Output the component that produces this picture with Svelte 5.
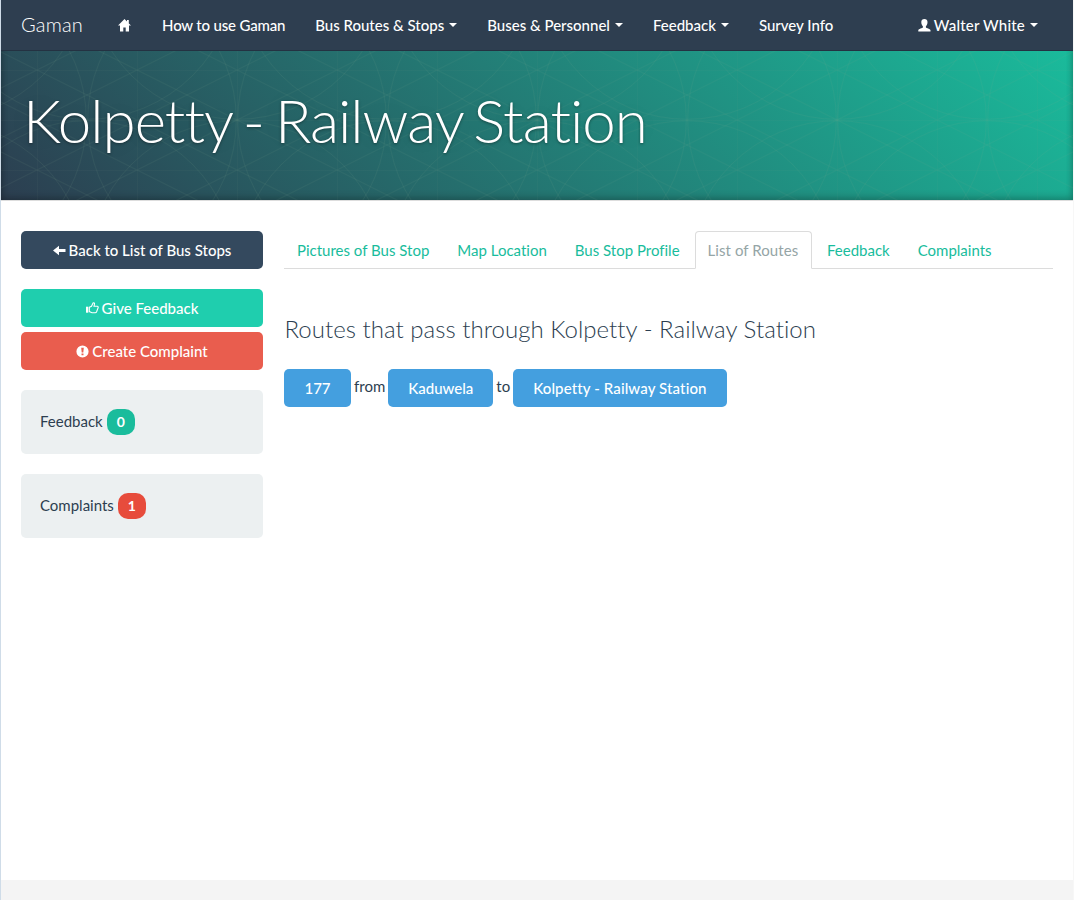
<script>
  const menu = [
    { label: 'How to use Gaman', tight: true },
    { label: 'Bus Routes & Stops', caret: true },
    { label: 'Buses & Personnel', caret: true },
    { label: 'Feedback', caret: true },
    { label: 'Survey Info' }
  ];
  const tabs = ['Pictures of Bus Stop', 'Map Location', 'Bus Stop Profile', 'List of Routes', 'Feedback', 'Complaints'];
  const active = 'List of Routes';
</script>

<div class="page">
  <nav>
    <a class="brand" href="#top">Gaman</a>
    <a class="item" href="#home" aria-label="Home">
      <svg class="home" width="13" height="13" viewBox="0 0 13 13"><path d="M6.500 0 0 6.600h2V12.500h3.300V8.600h2.400V12.500H11V6.600h2L10.800 4.400V1H9v1.600z" /></svg>
    </a>
    {#each menu as m}
      <a class="item" class:tight={m.tight} href="#menu">{m.label}{#if m.caret}<b class="caret"></b>{/if}</a>
    {/each}
    <a class="item user" href="#user"><svg width="13" height="13" viewBox="0 0 13 13"><path d="M6.400 0C4.500 0 3.300 1 3.300 3c0 2 .7 3.400 1.600 4.200v1.300C4.500 9.400.5 9.600.3 11.300V12.500h12.200v-1.200C12.300 9.600 8.300 9.400 7.900 8.500V7.200C8.800 6.400 9.500 5 9.500 3c0-2-1.200-3-3.100-3z" /></svg><span>Walter White</span><b class="caret"></b></a>
  </nav>

  <header>
    <svg class="mesh" width="100%" height="100%" aria-hidden="true">
      <defs>
        <pattern id="lines" width="100" height="50" x="36" y="30" patternUnits="userSpaceOnUse">
          <path d="M0 0 100 50M0 50 100 0" />
          <path class="faint" d="M.5 0V50M0 .5H100" />
        </pattern>
        <pattern id="rings" width="150" height="150" x="86" y="80" patternUnits="userSpaceOnUse">
          {#each [-150, 0, 150, 300] as cx}
            {#each [-150, 0, 150, 300] as cy}
              <circle {cx} {cy} r="149.300" />
            {/each}
          {/each}
        </pattern>
      </defs>
      <rect width="100%" height="100%" fill="url(#lines)" />
      <rect width="100%" height="100%" fill="url(#rings)" />
    </svg>
    <h1>Kolpetty - Railway Station</h1>
  </header>

  <main>
    <aside>
      <a class="btn navy" href="#back"><svg width="13" height="11" viewBox="0 0 13 11"><path d="M0 5.500 6 .8v3.300h6.500v2.800H6v3.300z" /></svg>Back to List of Bus Stops</a>
      <a class="btn green" href="#give"><svg width="13" height="12" viewBox="0 0 13 12"><path d="M0 4.700h2.300v6H0z" /><path class="outline" d="M3.300 5.300 5.500 4.300 7 1c.9-.6 1.700.1 1.500 1.200L8 4.300h3.200c.9 0 1.200.7.9 1.500l-1.500 4c-.3.7-.7.9-1.300.9H6L3.300 9.600z" /></svg>Give Feedback</a>
      <a class="btn red" href="#create"><svg width="13" height="13" viewBox="0 0 13 13"><path fill-rule="evenodd" d="M6.500.4a6.100 6.100 0 1 1 0 12.200 6.100 6.100 0 0 1 0-12.200zM5.200 2.700l.5 4.800h1.600l.5-4.800zM5.500 8.400v1.800h2V8.400z" /></svg>Create Complaint</a>
      <div class="well">Feedback <span class="badge">0</span></div>
      <div class="well">Complaints <span class="badge danger">1</span></div>
    </aside>

    <section>
      <div class="tabs">
        {#each tabs as t}
          <a href="#tab" class:active={t === active}>{t}</a>
        {/each}
      </div>
      <h3>Routes that pass through Kolpetty - Railway Station</h3>
      <div class="route">
        <a class="btn blue" href="#r">177</a><span>from</span><a class="btn blue" href="#r">Kaduwela</a><span>to</span><a class="btn blue" href="#r">Kolpetty - Railway Station</a>
      </div>
    </section>
  </main>
  <footer></footer>
</div>

<style>
  :global(body) { margin: 0; background: #fff; }
  * { box-sizing: border-box; }
  a { text-decoration: none; color: inherit; }
  svg { fill: currentColor; flex: none; }
  .page {
    display: flex; flex-direction: column; height: 900px; overflow: hidden;
    border-left: 1px solid #cfdce8; border-right: 1px solid #f7f7f7;
    font: 400 15px/21px Lato, sans-serif; color: #2c3e50; font-variant-ligatures: none;
  }
  nav {
    position: relative; z-index: 1; flex: none; display: flex; align-items: center;
    height: 51px; padding: 0 20px; background: #2e3e50; border-bottom: 1px solid #243242; color: #fff;
  }
  .brand { font-size: 20px; font-weight: 300; letter-spacing: .2px; margin: -2px 20px 0 0; }
  .item { display: flex; align-items: center; padding: 0 15px; font-weight: 500; white-space: nowrap; }
  .tight { letter-spacing: -.18px; margin-left: 1px; }
  .user { margin-left: auto; }
  .user span { margin-left: 3px; letter-spacing: .2px; }
  .caret { border: 4px solid transparent; border-top-color: #fff; border-bottom: 0; margin-left: 5px; }
  header {
    position: relative; flex: none; height: 160px; margin-top: -11px; padding: 40px 22px 0;
    background: linear-gradient(45deg, #2c3e50, #1abc9c);
    box-shadow: inset 0 3px 7px rgba(0,0,0,.2), inset 0 -3px 7px rgba(0,0,0,.2), 0 1px 0 #ddd;
  }
  .mesh { position: absolute; inset: 0; fill: none; }
  .mesh path, .mesh circle { fill: none; stroke: #82a88c; stroke-opacity: .1; }
  .mesh .faint { stroke-opacity: .05; }
  h1 {
    position: relative; margin: 0; font-size: 60px; line-height: 80px; font-weight: 300; color: #fff; white-space: nowrap;
    letter-spacing: -.98px; word-spacing: -4.300px;
    text-shadow: 0 1px 3px rgba(0,0,0,.4), 0 0 30px rgba(0,0,0,.075);
  }
  main { flex: 1; display: flex; gap: 21px; padding: 31px 20px 0; }
  aside { width: 242px; flex: none; }
  section { flex: 1; }
  .btn {
    display: flex; align-items: center; justify-content: center; gap: 3px; height: 38px;
    border-radius: 5px; color: #fff; font-weight: 500; white-space: nowrap;
  }
  .navy { background: #34495e; margin-bottom: 20px; }
  .green { background: #1fceae; margin-bottom: 5px; }
  .red { background: #e95d4e; margin-bottom: 20px; }
  .outline { fill: none; stroke: currentColor; stroke-width: 1.100; }
  .well { height: 64px; margin-bottom: 20px; padding: 19px; border-radius: 5px; background: #ecf0f1; display: flex; gap: 4px; line-height: 25px; }
  .badge { height: 26px; line-height: 26px; min-width: 28px; text-align: center; border-radius: 10px; background: #1abc9c; color: #fff; font-size: 14px; font-weight: 700; }
  .danger { background: #e74c3c; }
  .tabs { display: flex; gap: 2px; height: 38px; border-bottom: 1px solid #dcdcdc; color: #18bc9c; }
  .tabs a { height: 38px; padding: 8px 12px 0; border: 1px solid transparent; border-radius: 4px 4px 0 0; white-space: nowrap; }
  .tabs .active { color: #95a5a6; background: #fff; border-color: #dcdcdc; border-bottom-color: #fff; width: 117.400px; letter-spacing: .07px; }
  h3 { margin: 46px 0 0 .5px; font-size: 24px; line-height: 28px; font-weight: 300; letter-spacing: .03px; }
  .route { display: flex; margin-top: 26px; gap: 3px; }
  .route span { line-height: 35px; }
  .blue { background: #449fdf; padding: 0 20px; }
  .blue:first-child { min-width: 67px; }
  .blue:last-child { letter-spacing: .12px; }
  footer { height: 20px; flex: none; background: #f4f4f4; }
</style>
